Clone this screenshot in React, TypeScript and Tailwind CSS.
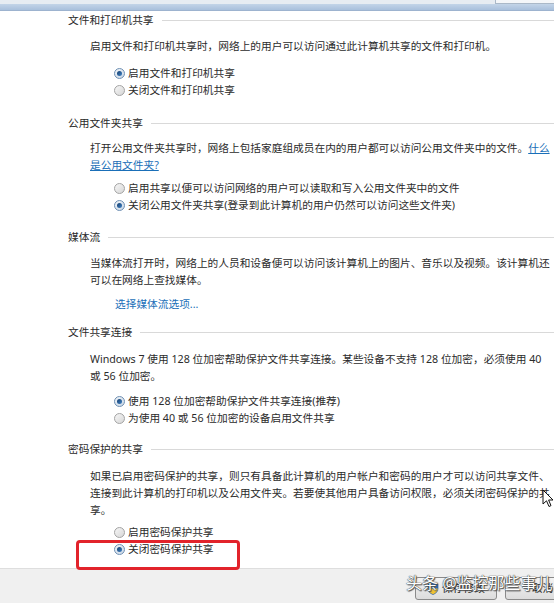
import React from "react";

const FONT = '"Noto Sans", "Noto Sans CJK SC", sans-serif';

function Header({ title, className = "" }: { title: string; className?: string }) {
  return (
    <div className={`flex items-center h-[17px] ${className}`}>
      <span className="whitespace-nowrap text-[#2a2a2a]">{title}</span>
      <div className="flex-1 h-px bg-[#d9d9d9] ml-[8px]" />
    </div>
  );
}

function Radio({ checked, label }: { checked?: boolean; label: string }) {
  return (
    <div className="flex items-center h-[17px] whitespace-nowrap">
      <span
        className={`w-[11px] h-[11px] rounded-full border flex items-center justify-center mr-[3px] ${
          checked
            ? "border-[#6e8fb3] bg-gradient-to-br from-[#f2f6fa] to-[#c9d6e4]"
            : "border-[#a3a3a3] bg-gradient-to-br from-[#f7f7f7] to-[#d6d6d6]"
        }`}
      >
        {checked && <span className="w-[5px] h-[5px] rounded-full bg-gradient-to-br from-[#163f6e] to-[#3f82c6]" />}
      </span>
      <span className="text-[#2b2b2b]">{label}</span>
    </div>
  );
}

function Desc({ lines, children }: { lines?: string[]; children?: React.ReactNode }) {
  return (
    <div className="pl-[22px] leading-[17px] text-[#2b2b2b]">
      {lines?.map((l, i) => (
        <div key={i} className="whitespace-nowrap">
          {l}
        </div>
      ))}
      {children}
    </div>
  );
}

export default function App() {
  return (
    <div
      className="relative w-[554px] h-[603px] overflow-hidden bg-white flex flex-col text-[10.7px]"
      style={{ fontFamily: FONT }}
    >
      {/* top band */}
      <div className="h-[4px] bg-[#e7ecf2] flex justify-end">
        <div className="w-[59px] h-full border-l border-b border-[#aab8c8] bg-[#f4f6f9]" />
      </div>
      <div className="h-[7px] bg-gradient-to-b from-[#c3d4e8] to-[#a9c0dc] border-b border-[#9db3cf]" />

      <div className="pl-[68px]">
        {/* section 1 */}
        <Header title="文件和打印机共享" className="mt-[1px]" />
        <div className="mt-[9px]">
          <Desc lines={["启用文件和打印机共享时，网络上的用户可以访问通过此计算机共享的文件和打印机。"]} />
        </div>
        <div className="mt-[10px] pl-[46px]">
          <Radio checked label="启用文件和打印机共享" />
          <Radio label="关闭文件和打印机共享" />
        </div>

        {/* section 2 */}
        <Header title="公用文件夹共享" className="mt-[16px]" />
        <div className="mt-[8px]">
          <Desc>
            <div className="whitespace-nowrap">
              打开公用文件夹共享时，网络上包括家庭组成员在内的用户都可以访问公用文件夹中的文件。
              <span className="text-[#1a6fb8] underline">什么</span>
            </div>
            <div className="whitespace-nowrap text-[#1a6fb8] underline">是公用文件夹?</div>
          </Desc>
        </div>
        <div className="mt-[6px] pl-[46px]">
          <Radio label="启用共享以便可以访问网络的用户可以读取和写入公用文件夹中的文件" />
          <Radio checked label="关闭公用文件夹共享(登录到此计算机的用户仍然可以访问这些文件夹)" />
        </div>

        {/* section 3 */}
        <Header title="媒体流" className="mt-[15px]" />
        <div className="mt-[9px]">
          <Desc
            lines={[
              "当媒体流打开时，网络上的人员和设备便可以访问该计算机上的图片、音乐以及视频。该计算机还",
              "可以在网络上查找媒体。",
            ]}
          />
        </div>
        <div className="mt-[7px] pl-[47px] leading-[17px] text-[#1a6fb8] whitespace-nowrap">选择媒体流选项...</div>

        {/* section 4 */}
        <Header title="文件共享连接" className="mt-[11px]" />
        <div className="mt-[10px]">
          <Desc
            lines={[
              "Windows 7 使用 128 位加密帮助保护文件共享连接。某些设备不支持 128 位加密，必须使用 40",
              "或 56 位加密。",
            ]}
          />
        </div>
        <div className="mt-[8px] pl-[46px]">
          <Radio checked label="使用 128 位加密帮助保护文件共享连接(推荐)" />
          <Radio label="为使用 40 或 56 位加密的设备启用文件共享" />
        </div>

        {/* section 5 */}
        <Header title="密码保护的共享" className="mt-[14px]" />
        <div className="mt-[10px]">
          <Desc
            lines={[
              "如果已启用密码保护的共享，则只有具备此计算机的用户帐户和密码的用户才可以访问共享文件、",
              "连接到此计算机的打印机以及公用文件夹。若要使其他用户具备访问权限，必须关闭密码保护的共",
              "享。",
            ]}
          />
        </div>
        <div className="mt-[5px] pl-[46px]">
          <Radio label="启用密码保护共享" />
          <Radio checked label="关闭密码保护共享" />
        </div>
      </div>

      {/* footer */}
      <div className="mt-auto h-[35px] bg-[#f0f0f0] border-t border-[#dedede] flex items-start pt-[8px] pl-[415px] gap-[8px]">
        <div className="w-[82px] h-[23px] shrink-0 rounded-[3px] border border-[#8a8a8a] bg-gradient-to-b from-[#f4f4f4] to-[#dcdcdc] flex items-center justify-center gap-[3px] text-[#222]">
          <svg width="12" height="13" viewBox="0 0 12 13">
            <path d="M6 0.5 L11 2.3 V6.5 C11 9.5 8.8 11.5 6 12.5 C3.2 11.5 1 9.5 1 6.5 V2.3 Z" fill="#2f6fc0" stroke="#1c4a86" strokeWidth="0.6" />
            <path d="M6 0.8 V12.2 C3.3 11.2 1.3 9.4 1.3 6.5 H6 Z" fill="#f1c232" />
            <path d="M6 6.5 H10.7 C10.7 9.4 8.7 11.2 6 12.2 Z" fill="#f1c232" />
          </svg>
          <span className="whitespace-nowrap">保存修改</span>
        </div>
        <div className="w-[75px] h-[23px] shrink-0 rounded-[3px] border border-[#8a8a8a] bg-gradient-to-b from-[#f4f4f4] to-[#dcdcdc] flex items-center justify-center text-[#222]">
          <span className="whitespace-nowrap">取消</span>
        </div>
      </div>

      {/* red highlight box */}
      <div className="absolute left-[76px] top-[540px] w-[164px] h-[30px] border-[3px] border-[#e2232b] rounded-[4px]" />

      {/* mouse cursor */}
      <svg className="absolute left-[542px] top-[489px]" width="12" height="19" viewBox="0 0 12 19">
        <path d="M1 1 L1 15 L4.5 11.8 L7 17.5 L9 16.6 L6.6 11 L11 11 Z" fill="#fff" stroke="#111" strokeWidth="1" strokeLinejoin="round" />
      </svg>

      {/* watermark */}
      <div
        className="absolute left-[406px] top-[573px] text-[16px] leading-[20px] text-white whitespace-nowrap [text-shadow:0_0_1px_#333,0_0_1px_#333,1px_1px_1px_#555]"
        style={{ fontFamily: FONT }}
      >
        头条 @监控那些事儿
      </div>
    </div>
  );
}
